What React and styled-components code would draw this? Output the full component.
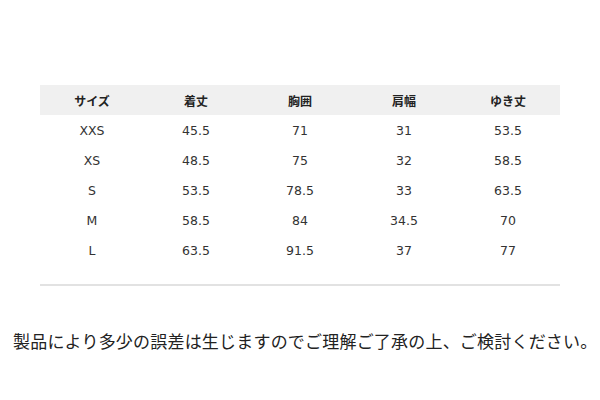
import React from 'react'
import styled, { createGlobalStyle } from 'styled-components'

const GlobalStyle = createGlobalStyle`
    body {
        margin: 0;
        background: #fff;
        font-family: "DejaVu Sans", "Noto Sans CJK JP", sans-serif;
        color: #333;
    }
`

const Page = styled.div`
    width: 600px;
    height: 400px;
    padding-top: 85px;
    box-sizing: border-box;
`

const TableWrap = styled.div`
    margin: 0 40px;
    padding-bottom: 19px;
    border-bottom: 2px solid #e2e2e2;
`

const Row = styled.div`
    display: grid;
    grid-template-columns: repeat(5, 1fr);
    height: 30px;
    align-items: center;
    background: ${p => (p.head ? '#f0f0f0' : 'transparent')};
`

const Cell = styled.div`
    text-align: center;
    font-size: ${p => (p.head ? '12px' : '12.5px')};
    font-weight: ${p => (p.head ? 'bold' : 'normal')};
    font-family: ${p => (p.head ? '"Noto Sans CJK JP", sans-serif' : '"DejaVu Sans", sans-serif')};
    color: ${p => (p.head ? '#222' : '#333')};
`

const Note = styled.p`
    margin: 42px 0 0 13px;
    font-family: "Noto Sans CJK JP", sans-serif;
    font-size: 17px;
    color: #222;
    white-space: nowrap;
    letter-spacing: 0.2px;
`

const header = ['サイズ', '着丈', '胸囲', '肩幅', 'ゆき丈']
const rows = [
    ['XXS', '45.5', '71', '31', '53.5'],
    ['XS', '48.5', '75', '32', '58.5'],
    ['S', '53.5', '78.5', '33', '63.5'],
    ['M', '58.5', '84', '34.5', '70'],
    ['L', '63.5', '91.5', '37', '77'],
]

export default function App() {
    return (
        <Page>
            <GlobalStyle />
            <TableWrap>
                <Row head>
                    {header.map(h => <Cell head key={h}>{h}</Cell>)}
                </Row>
                {rows.map(r => (
                    <Row key={r[0]}>
                        {r.map((v, i) => <Cell key={i}>{v}</Cell>)}
                    </Row>
                ))}
            </TableWrap>
            <Note>製品により多少の誤差は生じますのでご理解ご了承の上、ご検討ください。</Note>
        </Page>
    )
}
